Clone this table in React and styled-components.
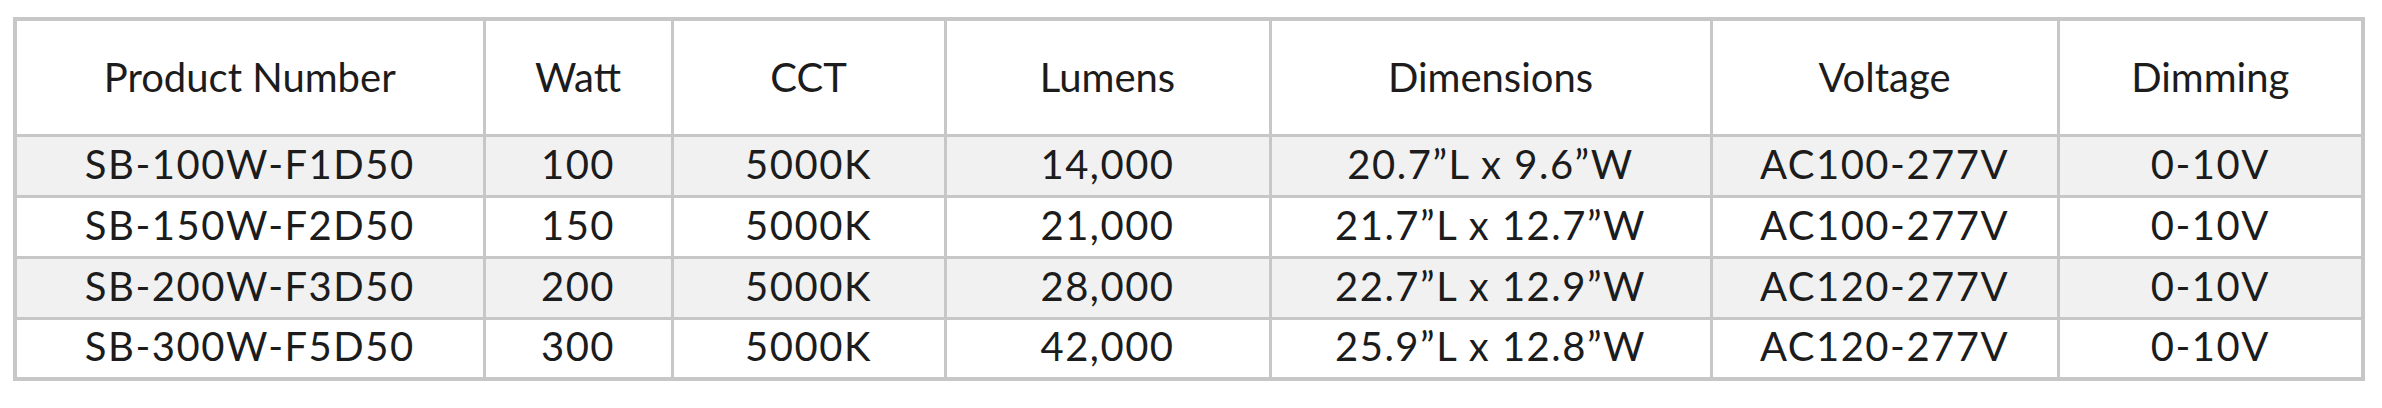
import React from "react";
import styled, { createGlobalStyle } from "styled-components";

const Global = createGlobalStyle`
  html, body { margin: 0; padding: 0; background: #ffffff; }
  body { font-family: "Lato", "Noto Sans", sans-serif; color: #1c1c1c; }
`;

const Page = styled.div`
  padding: 17px 21px 0 13px;
  height: 408px;
  box-sizing: border-box;
`;

const Table = styled.table`
  width: 2348px;
  table-layout: fixed;
  border-collapse: collapse;
  border: 4px solid #c7c7c7;
`;

const HeadRow = styled.tr`
  height: 116px;
  background: #ffffff;
`;

const Row = styled.tr`
  height: 61px;
  background: ${(p) => (p.$shade ? "#f1f1f1" : "#ffffff")};
`;

const HeadCell = styled.th`
  border: 3px solid #c7c7c7;
  font-weight: 400;
  font-size: 40px;
  text-align: center;
  vertical-align: middle;
  padding: 0;
  line-height: 1;
`;

const Cell = styled.td`
  border: 3px solid #c7c7c7;
  font-size: 40px;
  letter-spacing: 1.5px;
  text-align: center;
  vertical-align: middle;
  padding: 0 0 4px 0;
  line-height: 1;
`;

const widths = [469, 188, 273, 325, 441, 347, 305];
const headers = ["Product Number", "Watt", "CCT", "Lumens", "Dimensions", "Voltage", "Dimming"];
const rows = [
  ["SB-100W-F1D50", "100", "5000K", "14,000", "20.7\u201dL x 9.6\u201dW", "AC100-277V", "0-10V"],
  ["SB-150W-F2D50", "150", "5000K", "21,000", "21.7\u201dL x 12.7\u201dW", "AC100-277V", "0-10V"],
  ["SB-200W-F3D50", "200", "5000K", "28,000", "22.7\u201dL x 12.9\u201dW", "AC120-277V", "0-10V"],
  ["SB-300W-F5D50", "300", "5000K", "42,000", "25.9\u201dL x 12.8\u201dW", "AC120-277V", "0-10V"],
];

export default function App() {
  return (
    <Page>
      <Global />
      <Table>
        <colgroup>
          {widths.map((w, i) => (
            <col key={i} style={{ width: w }} />
          ))}
        </colgroup>
        <thead>
          <HeadRow>
            {headers.map((h) => (
              <HeadCell key={h}>{h}</HeadCell>
            ))}
          </HeadRow>
        </thead>
        <tbody>
          {rows.map((r, i) => (
            <Row key={r[0]} $shade={i % 2 === 0}>
              {r.map((c, j) => (
                <Cell key={j}>{c}</Cell>
              ))}
            </Row>
          ))}
        </tbody>
      </Table>
    </Page>
  );
}
